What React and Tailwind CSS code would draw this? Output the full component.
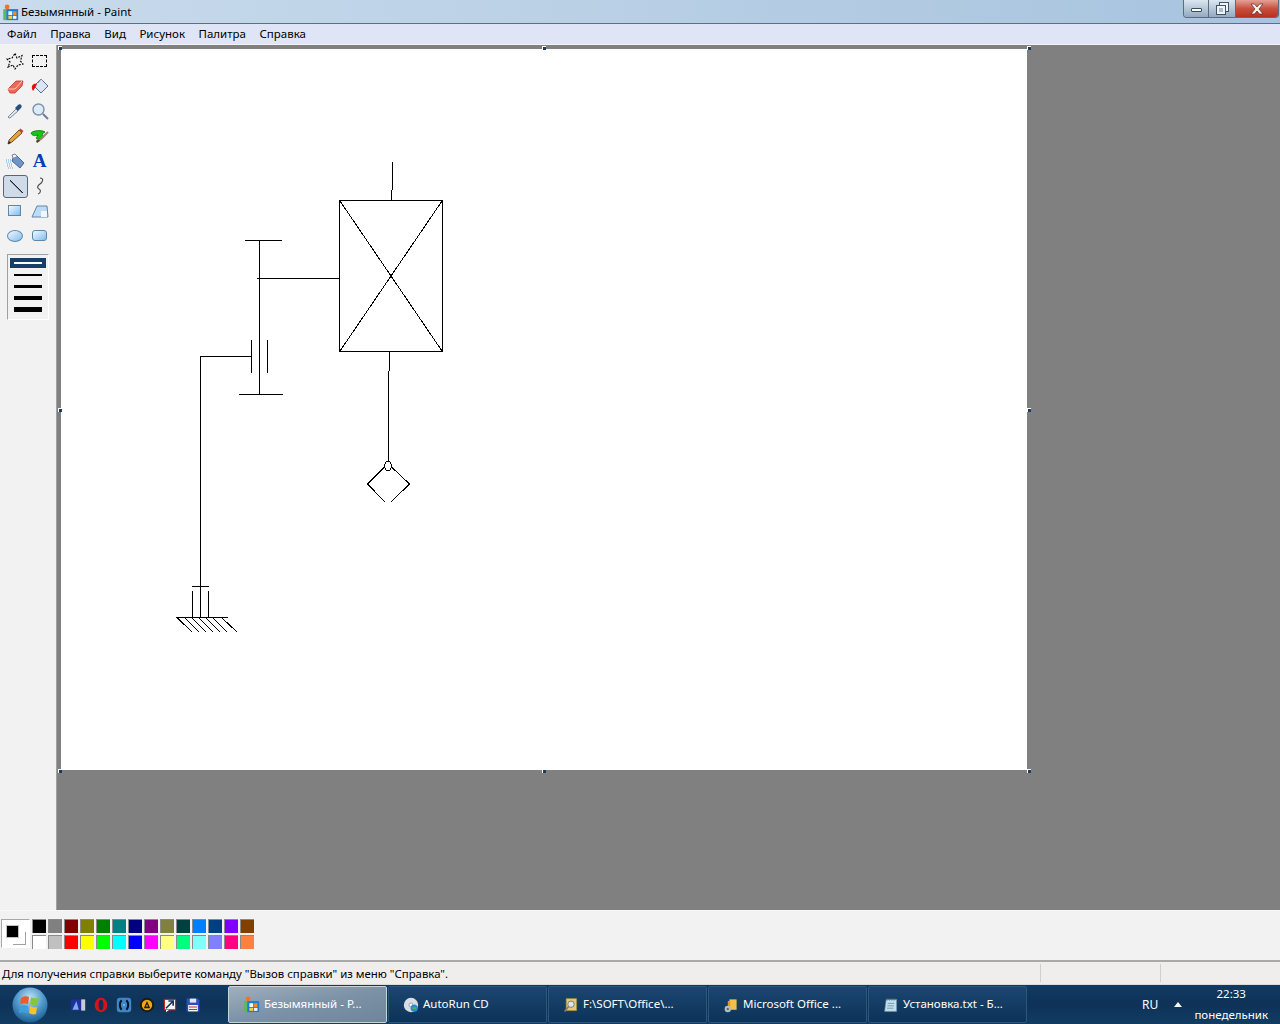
import React from "react";

const FONT = { fontFamily: '"Noto Sans","Open Sans",sans-serif' };

function Ico({ children, s = 20, vb = "0 0 20 20", className = "" }) {
  return (
    <svg width={s} height={s} viewBox={vb} className={`block shrink-0 ${className}`}>
      {children}
    </svg>
  );
}

const tools = [
  <Ico key="a"><path d="M10 2.500 12 7 17 4.500 15.500 10 18 13 13 14 10 18 8 14 3 16 5 11 2 8 7 7Z" fill="none" stroke="#000" strokeWidth="1.100" strokeDasharray="2 1.200" /></Ico>,
  <div key="b" className="h-[12px] w-[15px] border border-dashed border-black" />,
  <Ico key="c"><path d="M3 13 11 5h7l-1 5-7 7H5Z" fill="#ea6a58" stroke="#b8392c" strokeWidth=".8" /><path d="M3 13h7l7-8" fill="none" stroke="#f9c5b8" strokeWidth="1" /></Ico>,
  <Ico key="d"><path d="M11 3 18 10 11 17 4 10Z" fill="#dbe6f2" stroke="#55708f" /><path d="M8 7 11 3 13 5" fill="none" stroke="#7b8ea4" /><path d="M2 13C1 9 4 7 7 8L5 12 3 15Z" fill="#e01010" /></Ico>,
  <Ico key="e"><path d="M4 17 3 16 11 8l2 2-8 7Z" fill="#dfe7ef" stroke="#62748a" strokeWidth=".8" /><path d="M10 7 13 4c2-2 5 1 3 3l-3 3Z" fill="#27507f" /></Ico>,
  <Ico key="f"><circle cx="8.500" cy="8.500" r="5.500" fill="#dcebf8" stroke="#7c91a8" strokeWidth="1.400" /><path d="m13 13 5 5" stroke="#6d7f92" strokeWidth="2" /></Ico>,
  <Ico key="g"><path d="M3 18 4 14 14 4 17 7 7 16Z" fill="#e8a23c" stroke="#5b4630" strokeWidth=".9" /><path d="M14 4 15.500 2.500 18.500 5 17 7Z" fill="#c9453a" /><path d="M3 18 4 15l2 2Z" fill="#222" /></Ico>,
  <Ico key="h"><path d="M1 7c3-3 11-3 14-1l-3 2 2 3-4 2c-3 1-5-1-3-2l1-2C5 10 2 10 1 7Z" fill="#14c814" stroke="#0c5c10" strokeWidth=".7" /><path d="M10 14 18 6" stroke="#9a8670" strokeWidth="2" /><path d="M6 15c2-2 4-1 4 0l-3 2Z" fill="#5a3c20" /></Ico>,
  <Ico key="i"><path d="M8 7 11 4 19 12 15 17 7 10Z" fill="#6e94c8" stroke="#365078" strokeWidth=".8" /><path d="M8 7 7 4l3-1 2 2" fill="#f0f4f8" stroke="#667" strokeWidth=".8" /><path d="M1 9h5M1 11h6M2 13h6M2 15h6M3 17h5" stroke="#58aef0" strokeWidth="1.100" strokeDasharray="1 1" /></Ico>,
  <span key="j" className="text-[19px] font-bold leading-none text-[#0a3bb8]" style={{ fontFamily: '"Liberation Serif",serif' }}>A</span>,
  <div key="k" className="ml-[2px] mt-[1px] flex h-[23px] w-[25px] shrink-0 items-center justify-center rounded-[3px] border border-[#5a6672] bg-[#cfdbe8]">
    <Ico><path d="M4 4 17 17" stroke="#222" strokeWidth="1" /><path d="M4 5 16 17" stroke="#7d8794" strokeWidth="1" /></Ico>
  </div>,
  <Ico key="l"><path d="M10 2c4 0 3 4 0 6-3 2-3 4-1 5s2 4-1 5" fill="none" stroke="#4a5058" strokeWidth="1.200" /></Ico>,
  <div key="m" className="h-[11px] w-[13px] border border-[#5e86a8] bg-gradient-to-br from-[#f2f8fd] to-[#7fbdee]" />,
  <Ico key="n"><path d="M2 16 7 5h10l1 11Z" fill="#bcdcf6" stroke="#5e86a8" /><path d="M11 10h6v6h-6Z" fill="#eff6fc" stroke="none" /></Ico>,
  <div key="o" className="h-[12px] w-[16px] rounded-[50%] border border-[#5e86a8] bg-gradient-to-br from-[#f2f8fd] to-[#7fbdee]" />,
  <div key="p" className="h-[11px] w-[15px] rounded-[3px] border border-[#5e86a8] bg-gradient-to-br from-[#f2f8fd] to-[#7fbdee]" />,
];

const colors = [
  ["#000000", "#808080", "#800000", "#808000", "#008000", "#008080", "#000080", "#800080", "#808040", "#004040", "#0080ff", "#004080", "#8000ff", "#804000"],
  ["#ffffff", "#c0c0c0", "#ff0000", "#ffff00", "#00ff00", "#00ffff", "#0000ff", "#ff00ff", "#ffff80", "#00ff80", "#80ffff", "#8080ff", "#ff0080", "#ff8040"],
];

function Handle({ className }) {
  return <div className={`absolute h-[4px] w-[4px] border-l border-t border-white bg-[#1f3a5f] ${className}`} />;
}

function Drawing() {
  const l = [
    [392.5, 162, 392.5, 190], [391.5, 190, 391.5, 200],
    [245, 240.5, 282, 240.5], [259.5, 240, 259.5, 395], [239, 394.5, 283, 394.5],
    [257, 278.5, 340, 278.5],
    [251.5, 340, 251.5, 373], [267.5, 340, 267.5, 373],
    [200, 356.5, 251, 356.5], [200.5, 356, 200.5, 618],
    [389.5, 351, 389.5, 371], [388.5, 371, 388.5, 461],
    [192, 586.5, 209, 586.5], [192.5, 591, 192.5, 618], [208.5, 591, 208.5, 618],
    [176, 617.5, 228, 617.5],
  ];
  const thin = [
    [340, 201, 442, 351], [442, 201, 340, 351],
    [384.5, 467, 367.5, 484], [367.5, 484, 385, 502], [391.5, 467, 409.5, 484], [409.5, 484, 391, 502],
    [177.5, 618, 192, 632], [185, 618, 199, 632], [192, 618, 206, 632], [199, 618, 213, 632], [206, 618, 220, 632], [213, 618, 227, 632], [222, 618, 237, 632],
  ];
  return (
    <svg viewBox="61 49 966 721" width="966" height="721" className="block" shapeRendering="crispEdges">
      <rect x="339.5" y="200.5" width="103" height="151" fill="none" stroke="#000" />
      {l.map((a, i) => <line key={i} x1={a[0]} y1={a[1]} x2={a[2]} y2={a[3]} stroke="#000" />)}
      {thin.map((a, i) => <line key={i} x1={a[0]} y1={a[1]} x2={a[2]} y2={a[3]} stroke="#000" />)}
      <ellipse cx="388" cy="466" rx="3.500" ry="4.500" fill="#fff" stroke="#000" />
    </svg>
  );
}

function TaskBtn({ icon, text, active }) {
  return (
    <div className={`flex h-[37px] w-[159px] shrink-0 items-center gap-[4px] rounded-[2px] border pl-[14px] text-[11.5px] ${active ? "border-[#c6d2dc] bg-gradient-to-br from-[#9fb0bf] via-[#7c92a6] to-[#6f8599]" : "border-[#2d5578] bg-gradient-to-b from-[#1c4670] to-[#0c3358]"}`}>
      {icon}
      <span className="mb-[1px] whitespace-nowrap text-white">{text}</span>
    </div>
  );
}

const PaintIcon = (
  <Ico s={17}>
    <circle cx="6" cy="3.500" r="2.800" fill="#e8772a" />
    <rect x="1.500" y="6" width="3.500" height="13" fill="#5fb85a" />
    <rect x="5" y="6" width="14" height="13" fill="#1c7dd0" />
    <rect x="7.500" y="8.500" width="4.500" height="4.500" fill="#f2f6fa" />
    <rect x="13" y="8.500" width="4" height="4.500" fill="#f08a24" />
    <rect x="7.500" y="14" width="4.500" height="3.500" fill="#f2d040" />
    <rect x="13" y="14" width="4" height="3.500" fill="#f2f6fa" />
  </Ico>
);

export default function App() {
  return (
    <div className="flex h-[1024px] w-[1280px] flex-col overflow-hidden bg-[#f0f0f0] text-black" style={FONT}>
      {/* Title bar */}
      <div className="flex h-[24px] shrink-0 items-start justify-between border-b border-[#5f6f80] bg-gradient-to-r from-[#c9dbec] to-[#a7c3de]">
        <div className="flex h-[23px] items-center gap-[2px] pl-[2px] pt-[1px] text-[11.5px] text-black">
          {PaintIcon}
          <span className="whitespace-nowrap">Безымянный - Paint</span>
        </div>
        <div className="mr-[1px] flex h-[18px] overflow-hidden rounded-b-[4px] border border-t-0 border-[#5c6c7c]">
          <div className="flex w-[25px] items-center justify-center border-r border-[#5c6c7c] bg-gradient-to-b from-[#dbe6f1] to-[#93aac2]">
            <div className="mt-[3px] h-[4px] w-[11px] rounded-[1px] border border-[#3d4a58] bg-white" />
          </div>
          <div className="flex w-[27px] items-center justify-center border-r border-[#5c6c7c] bg-gradient-to-b from-[#dbe6f1] to-[#93aac2]">
            <div className="relative h-[11px] w-[11px]">
              <div className="absolute right-0 top-0 h-[8px] w-[8px] border-2 border-[#eef3f8] outline outline-1 outline-[#44525f]" />
              <div className="absolute bottom-0 left-0 h-[8px] w-[8px] border-2 border-[#eef3f8] bg-[#a9bccf] outline outline-1 outline-[#44525f]" />
            </div>
          </div>
          <div className="flex w-[42px] items-center justify-center bg-gradient-to-b from-[#e3a096] via-[#c8503f] to-[#b8301f]">
            <svg width="14" height="12" viewBox="0 0 14 12"><path d="M1 1h3.500L7 4l2.500-3H13L9 6l4 5H9.500L7 8l-2.500 3H1l4-5Z" fill="#f4f4f4" stroke="#5a2a24" strokeWidth=".7" /></svg>
          </div>
        </div>
      </div>

      {/* Menu */}
      <div className="flex h-[20px] shrink-0 items-center gap-[13.5px] bg-[#dfe5f6] pb-[1px] pl-[7px] text-[11.5px] text-black">
        {["Файл", "Правка", "Вид", "Рисунок", "Палитра", "Справка"].map((m) => (
          <span key={m} className="whitespace-nowrap">{m}</span>
        ))}
      </div>
      <div className="h-px shrink-0 bg-[#f4f4f4]" />

      {/* Main */}
      <div className="flex min-h-0 flex-1">
        <aside className="flex w-[57px] shrink-0 flex-col border-r border-[#a0a0a0] bg-[#f2f2f2] pl-[2px] pt-[3px]">
          <div className="grid grid-cols-[25px_25px] auto-rows-[25px]">
            {tools.map((t, i) => (
              <div key={i} className="flex items-center justify-center">{t}</div>
            ))}
          </div>
          <div className="ml-[5px] mt-[6px] flex h-[66px] w-[42px] flex-col items-center gap-[7px] border border-b-white border-l-[#a0a0a0] border-r-white border-t-[#a0a0a0] pt-[3px]">
            <div className="flex h-[10px] w-[36px] items-center justify-center bg-[#153e6b]">
              <div className="h-[2px] w-[28px] bg-white" />
            </div>
            <div className="-mt-[1px] h-[2px] w-[28px] bg-black" />
            <div className="mt-[2px] h-[3px] w-[28px] bg-black" />
            <div className="mt-[1px] h-[4px] w-[28px] bg-black" />
            <div className="h-[5px] w-[28px] bg-black" />
          </div>
        </aside>
        <main className="flex-1 bg-[#808080] pl-[4px] pt-[4px]">
          <div className="relative w-[966px]">
            <div className="bg-white"><Drawing /></div>
            <Handle className="-left-[3px] -top-[3px]" />
            <Handle className="left-[481px] -top-[3px]" />
            <Handle className="left-[966px] -top-[3px]" />
            <Handle className="-left-[3px] top-[359px]" />
            <Handle className="left-[966px] top-[359px]" />
            <Handle className="-left-[3px] top-[720px]" />
            <Handle className="left-[481px] top-[720px]" />
            <Handle className="left-[966px] top-[720px]" />
          </div>
        </main>
      </div>

      {/* Palette */}
      <div className="flex h-[50px] shrink-0 items-start border-t border-[#f8f8f8] bg-[#f2f2f2] pl-[1px] pt-[8px]">
        <div className="relative h-[29px] w-[29px] border border-[#a8a8a8] border-b-white border-r-white bg-white">
          <div className="absolute left-[4px] top-[5px] h-[13px] w-[13px] border border-[#c0c0c0] bg-black" />
          <div className="absolute left-[11px] top-[12px] h-[13px] w-[13px] border-b border-r border-[#a0a0a0]" />
        </div>
        <div className="ml-[2px] flex flex-col gap-[2px]">
          {colors.map((row, i) => (
            <div key={i} className="flex gap-[2px]">
              {row.map((c, j) => (
                <div key={j} className="h-[14px] w-[14px] border-l border-t border-[#8a8a8a]" style={{ backgroundColor: c }} />
              ))}
            </div>
          ))}
        </div>
      </div>

      {/* Status */}
      <div className="flex h-[24px] shrink-0 items-center border-t-2 border-t-[#a9a9a9] bg-[#f0eded] text-[11.4px] text-black">
        <span className="mt-[1px] w-[1040px] whitespace-nowrap pl-[2px]">Для получения справки выберите команду "Вызов справки" из меню "Справка".</span>
        <div className="h-[18px] w-[120px] border-l border-[#cfcfcf]" />
        <div className="h-[18px] flex-1 border-l border-[#cfcfcf]" />
      </div>

      {/* Taskbar */}
      <div className="flex h-[40px] shrink-0 items-center border-t border-[#d8dde2] bg-gradient-to-b from-[#113a62] via-[#0e3258] to-[#123c62] text-white">
        <div className="ml-[12px] flex h-[36px] w-[36px] items-center justify-center">
          <svg width="36" height="36" viewBox="0 0 36 36">
            <defs>
              <radialGradient id="orb" cx="50%" cy="30%" r="70%">
                <stop offset="0" stopColor="#c3e2f6" />
                <stop offset=".55" stopColor="#4f98cc" />
                <stop offset="1" stopColor="#1d5e90" />
              </radialGradient>
            </defs>
            <circle cx="18" cy="18" r="17.500" fill="url(#orb)" />
            <path d="M9 11c3-2 6-2 8-1l-1 7c-3-1-5-1-8 0Z" fill="#ee5a2a" />
            <path d="M19 10c2 1 5 2 8 1l-2 7c-3 1-5 0-7-1Z" fill="#82c83c" />
            <path d="M8 19c3-1 5-1 8 0l-1 7c-3-1-5-1-8 0Z" fill="#3ca0dc" />
            <path d="M18 19c2 1 4 2 7 1l-1 7c-3 1-5 0-7-1Z" fill="#f4c428" />
          </svg>
        </div>
        <div className="ml-[22px] flex w-[158px] shrink-0 items-center gap-[7px]">
          <Ico s={16}><rect x="1" y="3" width="18" height="14" fill="#1f2f9c" /><path d="M3 16 8 5l3 11Z" fill="#7ea8ef" /><rect x="14" y="3" width="5" height="14" fill="#c8ccd0" /></Ico>
          <Ico s={16}><ellipse cx="10" cy="10" rx="8" ry="9" fill="#d8121c" /><ellipse cx="10" cy="10" rx="3" ry="6.500" fill="#12304f" /></Ico>
          <Ico s={16}><rect x="1" y="1" width="18" height="18" rx="4" fill="#3f86c8" /><path d="M7 4c-3 3-3 9 0 12M13 4c3 3 3 9 0 12" fill="none" stroke="#04121e" strokeWidth="2.500" /><path d="M9 10h2" stroke="#7fdcff" strokeWidth="2" /></Ico>
          <Ico s={16}><circle cx="10" cy="10" r="9" fill="#1d1a12" /><circle cx="10" cy="10" r="6.500" fill="#f0a818" /><path d="M10 5 14 14H6Z" fill="#221a08" /><path d="M10 9 11.500 12h-3Z" fill="#f0a818" /></Ico>
          <Ico s={16}><rect x="3" y="3" width="14" height="13" fill="#f4f4f4" stroke="#c8201c" strokeWidth="1.400" /><path d="M5 14 14 5M8 5h6v6" fill="none" stroke="#12345a" strokeWidth="2" /><path d="M5 16v3l4-3Z" fill="#f4f4f4" /></Ico>
          <Ico s={16}><path d="M2 2h14l2 2v14H2Z" fill="#2a4fc0" /><rect x="6" y="2" width="8" height="5" fill="#e2e6ee" /><rect x="4" y="10" width="12" height="8" fill="#f4f4f4" /><path d="M5 12.500h10M5 15.500h10" stroke="#d02828" strokeWidth="1.300" /></Ico>
        </div>
        <div className="flex gap-[1px]">
          <TaskBtn active icon={PaintIcon} text="Безымянный - Р..." />
          <TaskBtn icon={<Ico s={16}><circle cx="10" cy="10" r="9" fill="#d9dee4" /><circle cx="10" cy="10" r="2.500" fill="#fff" stroke="#889" /><circle cx="14" cy="14" r="4.500" fill="#2a8ad0" /><path d="M12 13h4v2h-4Z" fill="#59b84a" /></Ico>} text="AutoRun CD" />
          <TaskBtn icon={<Ico s={16}><path d="M4 2h13v15H4Z" fill="#e8c878" stroke="#a88a40" strokeWidth=".8" /><circle cx="10" cy="9" r="4" fill="#d8e6ef" stroke="#6a6a60" /><path d="M7 12 2 18" stroke="#8a7a60" strokeWidth="2" /></Ico>} text="F:\SOFT\Office\..." />
          <TaskBtn icon={<Ico s={16}><path d="M8 3h9v13H8Z" fill="#f2c04a" /><path d="M6 5h3v11H6Z" fill="#d89a28" /><circle cx="6" cy="15" r="4" fill="#b8bcc0" /><circle cx="6" cy="15" r="1.400" fill="#555" /></Ico>} text="Microsoft Office ..." />
          <TaskBtn icon={<Ico s={16}><path d="M4 3h13v15H2Z" fill="#bfe0ee" stroke="#6b8aa0" strokeWidth=".8" /><path d="M5 1.500v3M8 1.500v3M11 1.500v3M14 1.500v3" stroke="#50606e" /><path d="M6 8h8M5.500 11h8M5 14h8" stroke="#6b8aa0" /></Ico>} text="Установка.txt - Б..." />
        </div>
        <div className="flex h-full min-w-0 flex-1 items-center">
          <span className="ml-[115px] text-[12px]">RU</span>
          <svg width="8" height="5" viewBox="0 0 8 5" className="ml-[16px]"><path d="M0 5 4 0l4 5Z" fill="#f4f4f4" /></svg>
          <div className="ml-[13px] flex h-full w-[72px] flex-col items-center justify-between whitespace-nowrap py-[2px] text-[11.5px] leading-[14px]">
            <span>22:33</span>
            <span>понедельник</span>
          </div>
        </div>
      </div>
    </div>
  );
}
